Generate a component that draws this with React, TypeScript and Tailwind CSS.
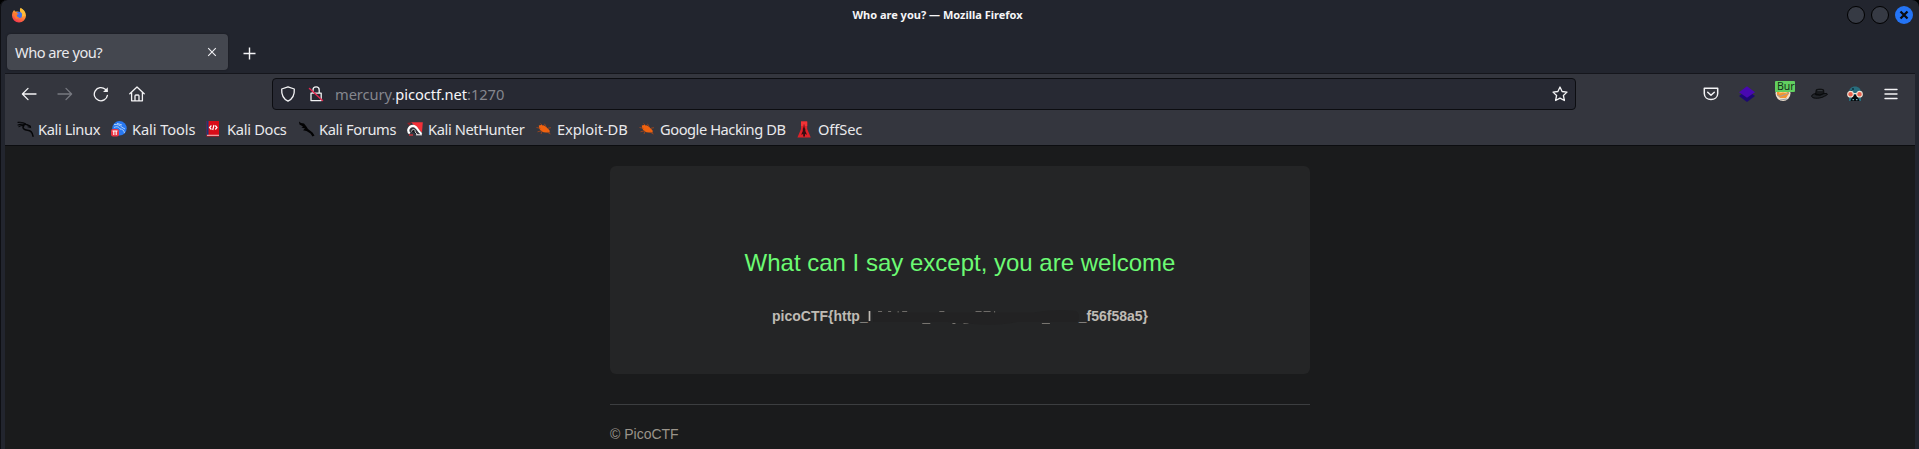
import type { ReactNode } from "react";

const Firefox = () => (
  <svg width="16" height="16" viewBox="0 0 16 16">
    <defs>
      <linearGradient id="fx" x1="0.8" y1="0" x2="0.3" y2="1">
        <stop offset="0" stopColor="#ffe14a" />
        <stop offset="0.45" stopColor="#ff9532" />
        <stop offset="1" stopColor="#f5314f" />
      </linearGradient>
    </defs>
    <path d="M10.2 1.2C12.6 2.6 15 5 15 8.6A7 6.9 0 0 1 1 8.6C1 6 2 4.2 3.2 2.9L4 4.6 6.6 4.4 9 5.2Z" fill="url(#fx)" />
    <circle cx="8" cy="7.9" r="3.2" fill="#4273e8" />
    <path d="M1.6 5.8C4 5.4 6.6 6 8 7L5.8 7.8C5.6 9.6 7 10.6 8.8 10.4L5 12Z" fill="#ff7a2c" />
    <path d="M9.6.8C8.4 2.5 8.8 4 10 5.1 11.3 6.3 11.7 8 10.8 10L13.7 8.6C14 5 12 3 9.6.8Z" fill="#ffbd36" />
  </svg>
);

const Line = ({ children, color = "#f3f3f5", w = 1.3 }: { children: ReactNode; color?: string; w?: number }) => (
  <svg width="16" height="16" viewBox="0 0 16 16" fill="none" stroke={color} strokeWidth={w} strokeLinecap="round" strokeLinejoin="round">
    {children}
  </svg>
);

const Dragon = () => (
  <svg width="18" height="16" viewBox="0 0 18 16" fill="none" stroke="#050608" strokeLinecap="round">
    <path d="M1 1.4C4 1 6.500 1.400 8.600 2.800M1 4C4 2.800 7 3 10 3.800L13.500 5.400M2 5.600C4 4.400 6 4.400 7.200 4.800" strokeWidth="1.1" />
    <path d="M6.600 4.600C5 7 7 9 10.500 9.200 14 9.400 15.500 11.500 16 15.200" strokeWidth="1.500" />
    <path d="M9.500 3.400L13 4.800 13.500 6.400 11 5.800" strokeWidth="1.1" />
  </svg>
);

const Tools = () => (
  <svg width="16" height="16" viewBox="0 0 16 16">
    <circle cx="8.500" cy="7.300" r="7.200" fill="#2878f0" />
    <path d="M3 3.600C6 3 9 4 11 6.300L14 8M3 6.500C6 5 8 6 9 8 11 8 13 9 13.500 12M6 2.300L11 4" stroke="#b9d6f8" strokeWidth=".9" fill="none" />
    <rect x="0" y="8" width="8" height="7.500" rx="2" fill="#e93442" />
    <path d="M1.500 10h5M2.800 10v4M5.200 10v4" stroke="#fff" strokeWidth="1.100" />
  </svg>
);

const Docs = () => (
  <svg width="14" height="16" viewBox="0 0 14 16">
    <rect x="0.500" width="12.500" height="15.500" fill="#d80c18" />
    <path d="M0.500 0h2v14h-2z" fill="#173a78" />
    <path d="M1 13.800h12v.9H1z" fill="#f7dada" />
    <path d="M5.400 4.500L3.600 6.500 5.400 8.500M9.300 4.500L11 6.500 9.300 8.500M8 4L6.700 9" stroke="#fff" strokeWidth="1.200" fill="none" />
  </svg>
);

const Forums = () => (
  <svg width="17" height="16" viewBox="0 0 17 16">
    <path d="M1 0.500L3 2 6 2.400 8.400 5.400 10 8 14.500 11.500 16.500 14.500 14.500 15.500 12.500 12.500 8.500 10 5 9.200 7 7.500 3.500 6.500 5 5.500 1.500 3.400Z" fill="#020203" />
  </svg>
);

const NetHunter = () => (
  <svg width="16" height="16" viewBox="0 0 16 16">
    <path d="M4 1.200H15.800L15 11.500Z" fill="#f23038" />
    <path d="M0 2L4 1.200 3 5Z" fill="#8a2026" />
    <path d="M2.800 12.500C-.2 10 1.500 5 6 4.800 10 4.900 9.500 8.500 14.500 13" stroke="#fff" strokeWidth="2.200" fill="none" />
    <path d="M4.500 10.500C5 7.500 9 8 8 11L10.500 13.500" fill="#15161b" stroke="#eee" strokeWidth=".8" />
    <path d="M2 14h4" stroke="#e03038" strokeWidth="1.300" />
    <path d="M9 13.800h6" stroke="#fff" strokeWidth="1" />
  </svg>
);

const Bug = () => (
  <svg width="16" height="16" viewBox="0 0 16 16">
    <path d="M2.800 4.500C5 3.500 8 4 10 5.800L13.500 9.200 13.800 11.500 10.500 11.500C7 11.800 4.500 10 3.200 7.500Z" fill="#f0620f" />
    <path d="M.5 6.500l4 .8M1.500 10.800l4-1M4.500 2.500L7 5M8.500 2.800L10 6M12 7.200l3-.5M11 11l3.500 2M6 10.500L5 13" stroke="#a8481a" strokeWidth=".8" />
  </svg>
);

const OffSec = () => (
  <svg width="14" height="17" viewBox="0 0 14 17">
    <path d="M4 .5h6.200V8L12.500 13.500 13.800 16.500H.4L1.700 13.500 4 8Z" fill="#dd2229" />
    <path d="M7 5.500L8.300 8 8.300 10 10 13.800 8 13V15.500H6.200V13L4.200 13.800 5.800 10V7.800Z" fill="#350d12" />
    <path d="M4 .5h6.200V5H4Z" fill="#f33336" />
    <path d="M6.600 3.500h.9v4h-.9z" fill="#6a1118" />
  </svg>
);

const Bookmark = ({ icon, label, w, fit }: { icon: ReactNode; label: string; w: string; fit: string }) => (
  <div className={`flex shrink-0 items-center ${w}`}>
    <span className="flex w-[21px] shrink-0 items-center">{icon}</span>
    <span className={`whitespace-nowrap ${fit}`}>{label}</span>
  </div>
);

const Burp = () => (
  <div className="relative h-[21px] w-5">
    <svg className="absolute top-1 left-0" width="16" height="17" viewBox="0 0 16 17">
      <circle cx="8" cy="8.500" r="7.500" fill="#eee0cd" />
      <path d="M2 5h12v3.500L11 13H5L2 10Z" fill="#f39532" />
      <path d="M2 10l3 1.500 5-2 4-2M5 15l7-1" stroke="#9aa0a8" strokeWidth="1" fill="none" />
      <path d="M4 8l4-1 4 1" stroke="#ffcf7d" fill="none" />
    </svg>
    <div className="absolute top-0 left-0 h-[11px] w-5 rounded-[1px] bg-[#62cf60] pl-0.5 text-[10.5px] leading-[11px] text-[#14301a]">Bur</div>
  </div>
);

const Hat = () => (
  <svg width="17" height="12" viewBox="0 0 17 12">
    <path d="M5.200 1.800C7 .9 11 .9 12.600 1.800L13 5.600Q9 7.600 4.600 6.200Z" fill="#17191c" stroke="#060708" strokeWidth=".8" />
    <path d="M4.600 5.600C1.500 6 .3 7.500 .8 8.700 2 11 10 10.600 13.500 8.200 16 7.400 17 6 15.800 5.500L13 5.600Q9 8.600 4.600 6.800Z" fill="#22252a" stroke="#060708" strokeWidth=".9" />
    <path d="M6.500 2.600h5" stroke="#44474c" strokeWidth=".7" fill="none" />
  </svg>
);

const Mask = () => (
  <svg width="16" height="16" viewBox="0 0 16 16">
    <path d="M2 8C1.500 2.500 4.500.5 8 .5S14.500 2.500 14 8V15H2Z" fill="#286d7d" />
    <path d="M5 2h2v2H5zM3 4h2v2H3z" fill="#123f4d" />
    <path d="M6 9h4l2.500 6H3.500Z" fill="#07090c" />
    <circle cx="3.500" cy="8.200" r="2.800" fill="#e8604c" stroke="#efe5d8" strokeWidth="1.100" />
    <circle cx="12.500" cy="8.200" r="2.800" fill="#e8604c" stroke="#efe5d8" strokeWidth="1.100" />
    <path d="M6.200 7.500h3.600" stroke="#efe5d8" strokeWidth="1" />
    <path d="M5.500 13h1.500v1.300H5.500zM9 13h1.500v1.300H9z" fill="#68aeb9" />
  </svg>
);

export default function App() {
  return (
    <div className="h-[449px] w-full overflow-hidden bg-black font-['Noto_Sans',sans-serif] text-[#e9e9ec]">
      <div className="flex h-full flex-col rounded-t-[7px] bg-[#22252e] shadow-[inset_1px_0_#0e0f13]">
        <header className="grid h-[34px] shrink-0 grid-cols-3 items-start px-[11px]">
          <div className="pt-[7px]"><Firefox /></div>
          <h1 className="pt-[7px] pr-[44px] text-center text-[11px] leading-4 font-bold text-[#f5f5f7]">Who are you? — Mozilla Firefox</h1>
          <div className="-mr-[5px] flex justify-end gap-1.5 pt-1.5">
            <span className="size-[18px] rounded-full border border-black bg-[#363a44]" />
            <span className="size-[18px] rounded-full border border-black bg-[#363a44]" />
            <span className="flex size-[18px] items-center justify-center rounded-full bg-[#2474f5]">
              <svg width="10" height="10" viewBox="0 0 10 10"><path d="M1.500 1.500l7 7M8.500 1.500l-7 7" stroke="#0b0c10" strokeWidth="2.300" /></svg>
            </span>
          </div>
        </header>

        <div className="flex h-[39px] shrink-0 items-start pl-[7px]">
          <div className="flex h-9 w-[221px] items-center justify-between rounded bg-[#44474f] pr-[11px] pl-2 shadow-[0_0_2px_#15161b]">
            <span className="text-[14.67px] tracking-[-0.5px]">Who are you?</span>
            <svg width="10" height="10" viewBox="0 0 10 10"><path d="M1.200 1.200l7.600 7.600M8.800 1.200L1.200 8.800" stroke="#f1f1f4" strokeWidth="1.100" /></svg>
          </div>
          <svg className="mt-[13px] ml-[15px]" width="13" height="13" viewBox="0 0 13 13"><path d="M6.500.5v12M.5 6.500h12" stroke="#f4f4f6" strokeWidth="1.400" /></svg>
        </div>

        <main className="mr-1 ml-[5px] flex min-h-0 flex-1 flex-col bg-[#1a1b1c]">
          <nav className="h-[73px] shrink-0 border-t border-b border-t-[#15161c] border-b-[#0c0d10] bg-[#34363e]">
            <div className="flex h-10 items-center pl-[15.500px]">
              <div className="flex w-[251.500px] shrink-0 gap-5">
                <Line><path d="M15 8H1.500M7 2.400L1.400 8 7 13.600" /></Line>
                <Line color="#777980"><path d="M1 8h13.500M9 2.400L14.600 8 9 13.600" /></Line>
                <Line><path d="M14.400 9.300A6.600 6.600 0 1 1 12.300 3.300L14 5" /><path d="M14.800 1.200v4.700h-4.700Z" fill="#f3f3f5" stroke="none" /></Line>
                <Line><path d="M.8 7.700L8 1l7.200 6.700M2.600 6.600v8.200h10.800V6.600M6 14.800V9.700C6 8.700 10 8.700 10 9.700v5.100" /></Line>
              </div>
              <div className="flex h-8 w-[1304px] shrink-0 items-center rounded border border-[#0c0d11] bg-[#272933] pr-[7px] pl-[7px]">
                <Line><path d="M8 .8L14.300 3C14.700 9 12.500 13 8 15.200 3.500 13 1.300 9 1.700 3Z" /></Line>
                <span className="ml-3"><Line><path d="M3 7.200h10.200v7.400H3ZM5 7V4a3.100 3.100 0 0 1 6.200 0v3" /><path d="M1.500 2.500l13 12" stroke="#e22850" strokeWidth="1.500" /></Line></span>
                <span className="ml-[11px] flex-1 text-[14.67px] leading-5 tracking-[-0.05px] text-[#85868e]">mercury.<span className="text-[#f7f7f9]">picoctf.net</span>:1270</span>
                <Line><path d="M8 1l2.100 4.500 4.900.6-3.600 3.400 1 5-4.400-2.400-4.400 2.400 1-5L1 6.100l4.900-.6Z" /></Line>
              </div>
              <div className="ml-[127px] flex items-center">
                <span className="w-9"><Line w={1.500}><path d="M1.300 2.300h13.400v5.200c0 8-13.400 8-13.400 0ZM4.700 6.200L8 9.300l3.300-3.100" /></Line></span>
                <span className="w-9"><svg width="16" height="16" viewBox="0 0 16 16"><path d="M8 4.500l8 5.500-8 6L0 10Z" fill="#1c0873" /><path d="M8 .2l8 6-8 5.600-8-5.600Z" fill="#4808b0" /></svg></span>
                <span className="w-9 pb-[5px]"><Burp /></span>
                <span className="w-9"><Hat /></span>
                <span className="w-[37px]"><Mask /></span>
                <svg width="14" height="12" viewBox="0 0 14 12"><path d="M1 1.500h12M1 6h12M1 10.500h12" stroke="#f3f3f5" strokeWidth="1.400" strokeLinecap="round" /></svg>
              </div>
            </div>
            <div className="flex h-[30px] items-center pl-3 text-[14.67px] leading-5">
              <Bookmark icon={<Dragon />} label="Kali Linux" w="w-[94px]" fit="tracking-[-0.4px]" />
              <Bookmark icon={<Tools />} label="Kali Tools" w="w-[95px]" fit="tracking-[-0.1px]" />
              <Bookmark icon={<Docs />} label="Kali Docs" w="w-[92px]" fit="tracking-[-0.3px]" />
              <Bookmark icon={<Forums />} label="Kali Forums" w="w-[109px]" fit="tracking-[-0.35px]" />
              <Bookmark icon={<NetHunter />} label="Kali NetHunter" w="w-[129px]" fit="tracking-[-0.4px]" />
              <Bookmark icon={<Bug />} label="Exploit-DB" w="w-[103px]" fit="tracking-[-0.1px]" />
              <Bookmark icon={<Bug />} label="Google Hacking DB" w="w-[158px]" fit="tracking-[-0.45px]" />
              <Bookmark icon={<OffSec />} label="OffSec" w="w-[80px]" fit="tracking-[-0.1px]" />
            </div>
          </nav>

          <div className="mx-auto w-[700px] pt-5 font-['Liberation_Sans',sans-serif]">
            <section className="h-[208px] rounded-md bg-[#242526] pt-[79px]">
              <h3 className="text-center text-[24px] leading-[35px] text-[#6cfa73]">What can I say except, you are welcome</h3>
              <div className="mx-auto mt-[26px] flex h-5 w-[376px] items-center text-[14px] leading-5 font-bold text-[#bfbbb4]">
                <span>picoCTF{"{"}http_</span>
                <svg className="min-w-0 flex-1" height="20" viewBox="0 0 210 20" preserveAspectRatio="none">
                  <path d="M1.500 5v10" stroke="#bfbbb4" strokeWidth="1.700" />
                  <path d="M10 5.500h4M20 5.500h3M30 5v2M34 5.500h5M71 5.500h5M107 5.500h6M115 5.500h7M126 5v3M137 7.500h4M168 7v1" stroke="#77746f" strokeWidth=".9" />
                  <path d="M54 17.500h8M84 17.500h3M95 17.500h5M173 17.500h8" stroke="#77746f" strokeWidth="1" />
                  <path d="M5 6.500H165Q185 3 207 5Q214 11 207 16H148Q130 20 105 18L80 16H5Z" fill="#222223" />
                </svg>
                <span>_f56f58a5{"}"}</span>
              </div>
            </section>
            <hr className="mt-[30px] border-[#3c3e40]" />
            <footer className="pt-[19px] text-[14px] leading-5 text-[#9a948a]">© PicoCTF</footer>
          </div>
        </main>
      </div>
    </div>
  );
}
